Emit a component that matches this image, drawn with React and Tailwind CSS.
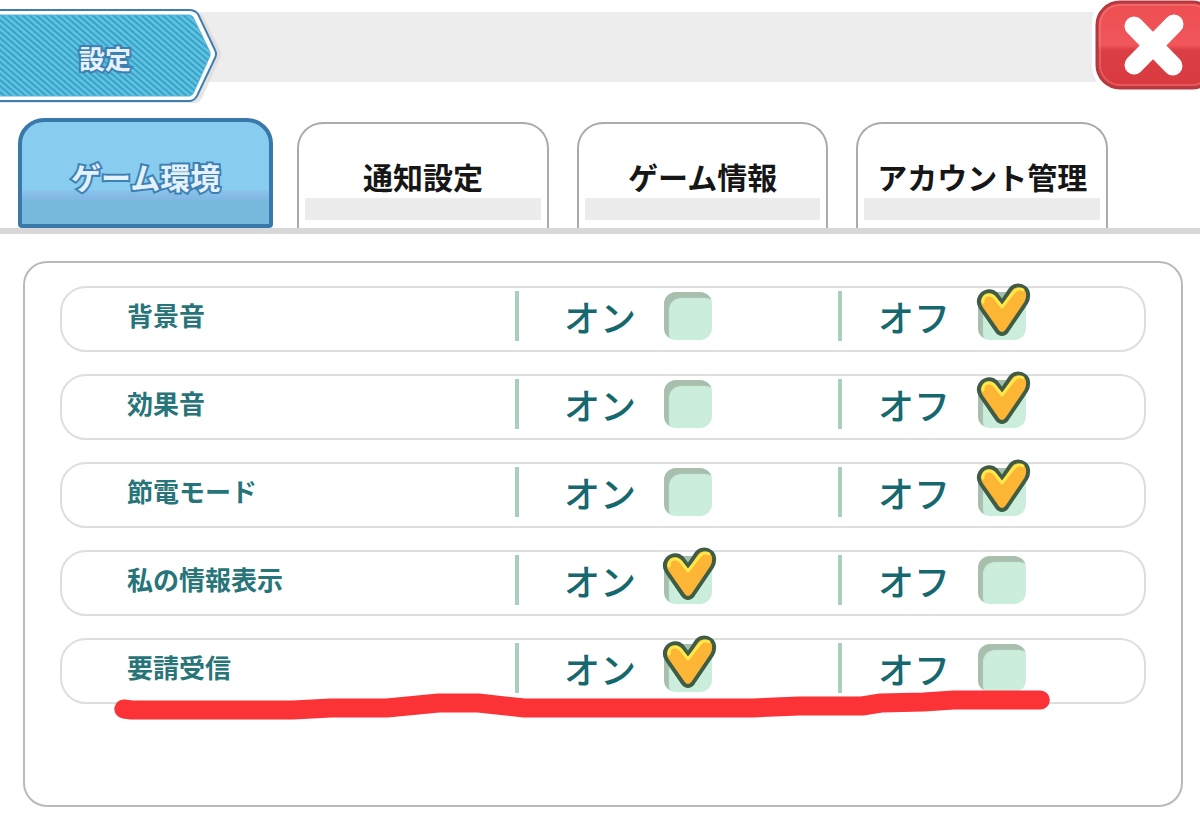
import { useState } from 'react';

const tabs = ['ゲーム環境', '通知設定', 'ゲーム情報', 'アカウント管理'];

const options = [
  { id: 'bgm', label: '背景音', value: 'off' },
  { id: 'sfx', label: '効果音', value: 'off' },
  { id: 'power', label: '節電モード', value: 'off' },
  { id: 'profile', label: '私の情報表示', value: 'on' },
  { id: 'request', label: '要請受信', value: 'on' },
];

function TitleRibbon() {
  return (
    <div className="relative z-10 mt-2 flex h-[96px] w-[224px] shrink-0 items-center">
      <svg className="absolute inset-0" width="224" height="96" viewBox="0 0 224 96" aria-hidden="true">
        <defs>
          <pattern id="stripes" width="7" height="6" patternUnits="userSpaceOnUse">
            <rect width="7" height="6" fill="#5cc3e4" />
            <path d="M-7 -6L14 12M-7 0L7 12M0 -6L14 6" stroke="#3a9fc4" strokeWidth="1.8" />
          </pattern>
        </defs>
        <path d="M-8 4H196Q200 4 203 8L220 42Q222 46 220 50L202 90Q199 95 195 95H-8Z" fill="#d6d6d6" opacity="0.6" />
        <path d="M-8 2H189Q195 2 198 6L215 42Q217 46 215 50L197 88Q194 93 189 93H-8Z" fill="#fff" stroke="#3f7eb0" strokeWidth="2" />
        <path d="M-8 7H190L193 9L210 44V48L193 86L190 88H-8Z" fill="url(#stripes)" stroke="#58b4da" strokeWidth="1" />
      </svg>
      <h1 className="relative pt-1 pl-[79px] text-[26px] leading-8 font-bold text-[#e6f2ff] [-webkit-text-stroke:4px_#3d80b0] [paint-order:stroke_fill]">
        設定
      </h1>
    </div>
  );
}

function CloseButton() {
  return (
    <button type="button" aria-label="閉じる" className="relative z-10 -mr-2 -ml-3 h-[94px] w-[116px] shrink-0">
      <svg width="116" height="94" viewBox="0 0 116 94" aria-hidden="true">
        <defs>
          <linearGradient id="closeFill" x1="0" y1="0" x2="0" y2="1">
            <stop offset="0" stopColor="#ee4e52" />
            <stop offset="0.5" stopColor="#f0565a" />
            <stop offset="0.56" stopColor="#db3e43" />
            <stop offset="1" stopColor="#d83a3f" />
          </linearGradient>
        </defs>
        <rect x="0" y="-5" width="124" height="98" rx="27" fill="#fff" />
        <rect x="5" y="2" width="118" height="86" rx="23" fill="url(#closeFill)" stroke="#b53a40" strokeWidth="3" />
        <rect x="8" y="5" width="112" height="80" rx="20" fill="none" stroke="#f58a8c" strokeWidth="2" opacity="0.4" />
        <path d="M42 26L81 66M82 24L42 65" stroke="#fff" strokeWidth="19" strokeLinecap="round" />
      </svg>
    </button>
  );
}

function Tab({ label, active, onClick }) {
  if (active) {
    return (
      <button
        type="button"
        role="tab"
        aria-selected="true"
        onClick={onClick}
        className="-mr-1 flex h-[110px] grow-[105] basis-0 flex-col justify-end rounded-t-[26px] rounded-b-sm border-4 border-[#3878ab] bg-[#88cdf0]"
      >
        <span className="-mb-1 w-full text-center text-[30px] leading-9 font-bold whitespace-nowrap text-[#e4f1ff] [-webkit-text-stroke:4px_#3f80b2] [paint-order:stroke_fill] relative">
          {label}
        </span>
        <span className="h-2.5 w-full bg-linear-to-b from-[#88c4ec] to-[#82b5e2]" />
        <span className="h-6 w-full bg-[#76b9dc]" />
      </button>
    );
  }
  return (
    <button
      type="button"
      role="tab"
      aria-selected="false"
      onClick={onClick}
      className="flex h-[106px] grow-[100] basis-0 flex-col justify-end rounded-t-[26px] border-2 border-b-0 border-[#ababab] bg-white px-1.5 pb-2"
    >
      <span className="w-full text-center text-[30px] leading-9 font-bold whitespace-nowrap text-[#161616]">{label}</span>
      <span className="mt-1 h-[22px] w-full bg-[#ececec]" />
    </button>
  );
}

function TickMark() {
  return (
    <svg className="pointer-events-none absolute -top-2.5 -left-[3px]" width="56" height="56" viewBox="0 0 56 56" aria-hidden="true">
      <path
        d="M27 20L21 12C16 7 8 9 5 15C3 19 4 23 6 26L22 49C25 53 29 53 32 49L51 21C54 16 54 9 50 6C45 2 38 3 35 8Z"
        fill="#fdb535"
        stroke="#3e5c46"
        strokeWidth="4"
        strokeLinejoin="round"
      />
      <path d="M8 20C8 12 16 11 20 16L27 25L38 11C41 7 45 6 48 8" fill="none" stroke="#ffe84a" strokeWidth="3" strokeLinecap="round" strokeLinejoin="round" />
    </svg>
  );
}

function Choice({ name, label, checked, onChange }) {
  return (
    <label className="flex cursor-pointer items-center gap-7">
      <span className="text-4xl font-medium whitespace-nowrap text-[#16686e]">{label}</span>
      <span className="relative block size-12">
        <input
          type="radio"
          name={name}
          checked={checked}
          onChange={onChange}
          className="block size-12 appearance-none rounded-xl bg-[#caeedb] shadow-[inset_5px_6px_1px_#a9bfae]"
        />
        {checked && <TickMark />}
      </span>
    </label>
  );
}

// hand-drawn underline that highlights the last option
function MarkerLine() {
  return (
    <svg
      className="pointer-events-none absolute top-[42px] left-0 h-10 w-full"
      viewBox="0 0 1086 40"
      preserveAspectRatio="none"
      aria-hidden="true"
    >
      <path
        d="M62 27L70 28H232L270 26H326L378 21H418L464 26H693L740 24H803L822 21L865 20L895 18H982"
        fill="none"
        stroke="#fb3236"
        strokeWidth="19"
        strokeLinecap="round"
        strokeLinejoin="round"
      />
    </svg>
  );
}

export default function App() {
  const [activeTab, setActiveTab] = useState(0);
  const [settings, setSettings] = useState(options);

  const handleChange = (id, value) => {
    setSettings(prev => prev.map(item => (item.id === id ? { ...item, value } : item)));
  };

  return (
    <div className="min-h-screen overflow-x-hidden bg-white pb-[26px] font-['Noto_Sans_CJK_JP',sans-serif]">
      <header className="flex h-[118px] items-start">
        <TitleRibbon />
        <div className="mt-3 -ml-6 h-[70px] flex-1 bg-[#ededed]" />
        <CloseButton />
      </header>

      <nav role="tablist" className="flex items-end gap-7 border-b-[6px] border-[#d8d8d8] pr-[92px] pl-[18px]">
        {tabs.map((tab, index) => (
          <Tab key={tab} label={tab} active={index === activeTab} onClick={() => setActiveTab(index)} />
        ))}
      </nav>

      <main className="mt-[27px] mr-[17px] ml-[23px] flex min-h-[546px] flex-col gap-[22px] rounded-3xl border-2 border-[#b9b9b9] px-[35px] pt-[23px] pb-6">
        {settings.map((item, index) => (
          <div
            key={item.id}
            role="radiogroup"
            aria-labelledby={`${item.id}-label`}
            className="relative rounded-[26px] border-2 border-[#dedede]"
          >
            <div className="grid h-[62px] grid-cols-[453fr_323fr_306fr] items-start pt-[3px]">
              <span id={`${item.id}-label`} className="pt-1.5 pl-[65px] text-[26px] leading-9 font-bold whitespace-nowrap text-[#277479]">
                {item.label}
              </span>
              <div className="flex h-[50px] items-center border-l-4 border-[#a9cfbb] pl-[45px]">
                <Choice name={item.id} label="オン" checked={item.value === 'on'} onChange={() => handleChange(item.id, 'on')} />
              </div>
              <div className="flex h-[50px] items-center border-l-4 border-[#a9cfbb] pl-9">
                <Choice name={item.id} label="オフ" checked={item.value === 'off'} onChange={() => handleChange(item.id, 'off')} />
              </div>
            </div>
            {index === settings.length - 1 && <MarkerLine />}
          </div>
        ))}
      </main>
    </div>
  );
}
